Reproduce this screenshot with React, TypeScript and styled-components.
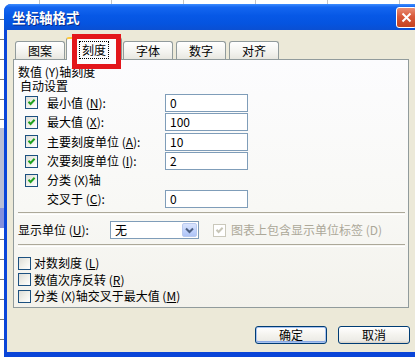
import React from 'react';
import styled, { createGlobalStyle, css } from 'styled-components';

const GlobalStyle = createGlobalStyle`
  html, body {
    margin: 0;
    padding: 0;
    overflow: hidden;
  }
  body {
    font-family: "Noto Sans CJK SC", "Liberation Sans", sans-serif;
    font-size: 12px;
    color: #000;
  }
`;

const Stage = styled.div`
  position: relative;
  width: 415px;
  height: 357px;
  overflow: hidden;
  box-sizing: border-box;
  padding: 4px 0 0 4px;
  background-color: #fff;
  background-image:
    linear-gradient(to bottom, transparent 128px, #b9bfd6 128px, #b9bfd6 208px, #8390dd 208px, #8390dd 228px, transparent 228px),
    repeating-linear-gradient(to right, transparent 0 39px, #c4c4c4 39px 40px, transparent 40px 72px),
    repeating-linear-gradient(to bottom, transparent 0 19px, #7a7a7a 19px 20px);
`;

const Window = styled.div`
  width: 425px;
  height: 353px;
  display: flex;
  flex-direction: column;
  background: #0a45d8;
  border-radius: 7px 7px 0 0;
  overflow: hidden;
`;

const TitleBar = styled.div`
  height: 26px;
  flex: none;
  display: flex;
  align-items: center;
  justify-content: space-between;
  padding: 0 12px 0 8px;
  background: linear-gradient(to bottom, #3d8dff 0%, #1466f0 12%, #0758e6 45%, #0554e0 75%, #0a4fd2 100%);
`;

const Title = styled.span`
  color: #fff;
  font-size: 13.5px;
  font-weight: 700;
  line-height: 16px;
  text-shadow: 1px 1px 0 #0a2c8a;
`;

const CloseButton = styled.div`
  width: 21px;
  height: 21px;
  box-sizing: border-box;
  border: 1px solid #fff;
  border-radius: 3px;
  background: linear-gradient(to bottom, #e98d73 0%, #d9593a 45%, #c4421f 100%);
  display: flex;
  align-items: center;
  justify-content: center;
`;

const Body = styled.div`
  flex: 1;
  margin: 0 3px 5px 3px;
  padding: 7px 0 0 6px;
  background: #ece9d8;
  display: flex;
  flex-direction: column;
`;

const TabStrip = styled.div`
  display: flex;
  align-items: flex-end;
  height: 22px;
  padding-left: 2px;
  gap: 3px;
  position: relative;
  z-index: 1;
`;

const Tab = styled.div<{ $active?: boolean; $w?: number }>`
  width: ${p => p.$w || 50}px;
  height: 18px;
  box-sizing: border-box;
  border: 1px solid #919b9c;
  border-bottom: none;
  border-radius: 3px 3px 0 0;
  background: linear-gradient(to bottom, #ffffff 0%, #f3f3ef 60%, #e8e7e0 100%);
  display: flex;
  align-items: center;
  justify-content: center;
  line-height: 14px;
  ${p => p.$active && css`
    height: 23px;
    margin: 0 -2px -1px -2px;
    background: #fcfcfe;
    border-top: 2px solid #ffc83c;
  `}
`;

const FocusText = styled.span`
  outline: 1px dotted #000;
  outline-offset: 1px;
  padding: 0 1px;
`;

const Panel = styled.div`
  width: 396px;
  height: 249px;
  box-sizing: border-box;
  border: 1px solid #919b9c;
  background: linear-gradient(to bottom, #fcfcfe 0%, #f8f8f5 60%, #f3f2ec 100%);
  padding: 5px 4px 0 4px;
  display: flex;
  flex-direction: column;
`;

const Heading = styled.div<{ $indent?: number }>`
  line-height: 14px;
  height: 14px;
  padding-left: ${p => p.$indent || 0}px;
`;

const FieldRow = styled.div<{ $h: number }>`
  height: ${p => p.$h}px;
  display: flex;
  align-items: center;
  padding-left: 7px;
`;

const BoxSlot = styled.div`
  width: 13px;
  flex: none;
`;

const FieldLabel = styled.span`
  width: 118px;
  margin-left: 9px;
  flex: none;
  line-height: 14px;
  white-space: nowrap;
`;

const TextBox = styled.div`
  width: 83px;
  height: 18px;
  box-sizing: border-box;
  border: 1px solid #7f9db9;
  background: #fff;
  padding-left: 4px;
  display: flex;
  align-items: center;
  line-height: 14px;
`;

const Box = styled.span<{ $disabled?: boolean }>`
  width: 13px;
  height: 13px;
  flex: none;
  box-sizing: border-box;
  border: 1px solid ${p => (p.$disabled ? '#cac8bb' : '#1c5180')};
  background: ${p => (p.$disabled ? '#fff' : 'linear-gradient(135deg, #dcdcd7 0%, #f0f0ea 50%, #ffffff 100%)')};
  display: flex;
  align-items: center;
  justify-content: center;
`;

const Separator = styled.div<{ $top: number }>`
  margin-top: ${p => p.$top}px;
  height: 1px;
  border-top: 1px solid #aca899;
  border-bottom: 1px solid #fff;
  margin-right: -1px;
`;

const UnitRow = styled.div`
  margin-top: 6px;
  height: 18px;
  display: flex;
  align-items: center;
`;

const UnitLabel = styled.span`
  width: 92px;
  flex: none;
  line-height: 14px;
`;

const Combo = styled.div`
  width: 89px;
  height: 18px;
  box-sizing: border-box;
  border: 1px solid #7f9db9;
  background: #fff;
  display: flex;
  align-items: center;
  justify-content: space-between;
  padding: 1px 1px 1px 4px;
  line-height: 14px;
`;

const ComboButton = styled.span`
  width: 15px;
  height: 14px;
  box-sizing: border-box;
  border: 1px solid #b9caef;
  border-radius: 2px;
  background: linear-gradient(to bottom, #d9e4fd 0%, #bfd1fb 60%, #aec4f6 100%);
  display: flex;
  align-items: center;
  justify-content: center;
`;

const DisabledOption = styled.div`
  margin-left: 14px;
  display: flex;
  align-items: center;
  gap: 5px;
  color: #aca899;
  line-height: 14px;
  white-space: nowrap;
`;

const OptionList = styled.div`
  margin-top: 7.75px;
  display: flex;
  flex-direction: column;
`;

const Option = styled.div`
  height: 16.5px;
  display: flex;
  align-items: center;
  gap: 3px;
  line-height: 14px;
  white-space: nowrap;
`;

const ButtonRow = styled.div`
  width: 397px;
  margin-top: 18px;
  display: flex;
  justify-content: flex-end;
  gap: 11px;
`;

const Button = styled.div<{ $default?: boolean }>`
  width: 72px;
  height: 18px;
  box-sizing: border-box;
  border: 1px solid #003c74;
  border-radius: 3px;
  background: linear-gradient(to bottom, #ffffff 0%, #f4f3ee 50%, #ecebe6 85%, #d6d0c5 100%);
  display: flex;
  align-items: center;
  justify-content: center;
  line-height: 14px;
  ${p => p.$default && css`
    box-shadow: inset 0 0 0 1px #a8c3f0, inset 0 -1px 0 1px #8aa9e4;
  `}
`;

const RedMark = styled.div`
  position: absolute;
  left: 72px;
  top: 34px;
  width: 49px;
  height: 35px;
  box-sizing: border-box;
  border: 5px solid #e3161b;
  pointer-events: none;
  z-index: 5;
`;

const Key = styled.u`
  text-underline-offset: 1px;
`;

const Check: React.FC<{ color?: string }> = ({ color = '#21a121' }) => (
  <svg width="11" height="11" viewBox="0 0 11 11">
    <path d="M2.5 4.8 L4.6 7 L8.6 2.8" fill="none" stroke={color} strokeWidth="2" />
  </svg>
);

const CheckBox: React.FC<{ checked?: boolean; disabled?: boolean }> = ({ checked, disabled }) => (
  <Box $disabled={disabled}>{checked && <Check color={disabled ? '#c8c6b8' : '#21a121'} />}</Box>
);

const autoFields = [
  { label: <>最小值 (<Key>N</Key>):</>, value: '0' },
  { label: <>最大值 (<Key>X</Key>):</>, value: '100' },
  { label: <>主要刻度单位 (<Key>A</Key>):</>, value: '10' },
  { label: <>次要刻度单位 (<Key>I</Key>):</>, value: '2' },
];

const options = [
  <>对数刻度 (<Key>L</Key>)</>,
  <>数值次序反转 (<Key>R</Key>)</>,
  <>分类 (X)轴交叉于最大值 (<Key>M</Key>)</>,
];

const tabs = [
  { name: '图案', w: 50 },
  { name: '刻度', w: 56, active: true },
  { name: '字体', w: 50 },
  { name: '数字', w: 50 },
  { name: '对齐', w: 50 },
];

const App: React.FC = () => {
  return (
    <Stage>
      <GlobalStyle />
      <Window>
        <TitleBar>
          <Title>坐标轴格式</Title>
          <CloseButton>
            <svg width="11" height="11" viewBox="0 0 11 11">
              <path d="M1.5 1.5 L9.5 9.5 M9.5 1.5 L1.5 9.5" stroke="#fff" strokeWidth="2" />
            </svg>
          </CloseButton>
        </TitleBar>
        <Body>
          <TabStrip>
            {tabs.map(t => (
              <Tab key={t.name} $active={t.active} $w={t.w}>
                {t.active ? <FocusText>{t.name}</FocusText> : t.name}
              </Tab>
            ))}
          </TabStrip>
          <Panel>
            <Heading>数值 (Y)轴刻度</Heading>
            <Heading $indent={2}>自动设置</Heading>
            {autoFields.map((f, i) => (
              <FieldRow key={i} $h={19.5}>
                <CheckBox checked />
                <FieldLabel>{f.label}</FieldLabel>
                <TextBox>{f.value}</TextBox>
              </FieldRow>
            ))}
            <FieldRow $h={18}>
              <CheckBox checked />
              <FieldLabel>分类 (X)轴</FieldLabel>
            </FieldRow>
            <FieldRow $h={19}>
              <BoxSlot />
              <FieldLabel>交叉于 (<Key>C</Key>):</FieldLabel>
              <TextBox>0</TextBox>
            </FieldRow>
            <Separator $top={4} />
            <UnitRow>
              <UnitLabel>显示单位 (<Key>U</Key>):</UnitLabel>
              <Combo>
                <span>无</span>
                <ComboButton>
                  <svg width="9" height="7" viewBox="0 0 9 7">
                    <path d="M1 1.5 L4.5 5 L8 1.5" fill="none" stroke="#4d6185" strokeWidth="2" />
                  </svg>
                </ComboButton>
              </Combo>
              <DisabledOption>
                <CheckBox checked disabled />
                <span>图表上包含显示单位标签 (D)</span>
              </DisabledOption>
            </UnitRow>
            <Separator $top={5} />
            <OptionList>
              {options.map((o, i) => (
                <Option key={i}>
                  <CheckBox />
                  <span>{o}</span>
                </Option>
              ))}
            </OptionList>
          </Panel>
          <ButtonRow>
            <Button $default>确定</Button>
            <Button>取消</Button>
          </ButtonRow>
        </Body>
      </Window>
      <RedMark />
    </Stage>
  );
};

export default App;
